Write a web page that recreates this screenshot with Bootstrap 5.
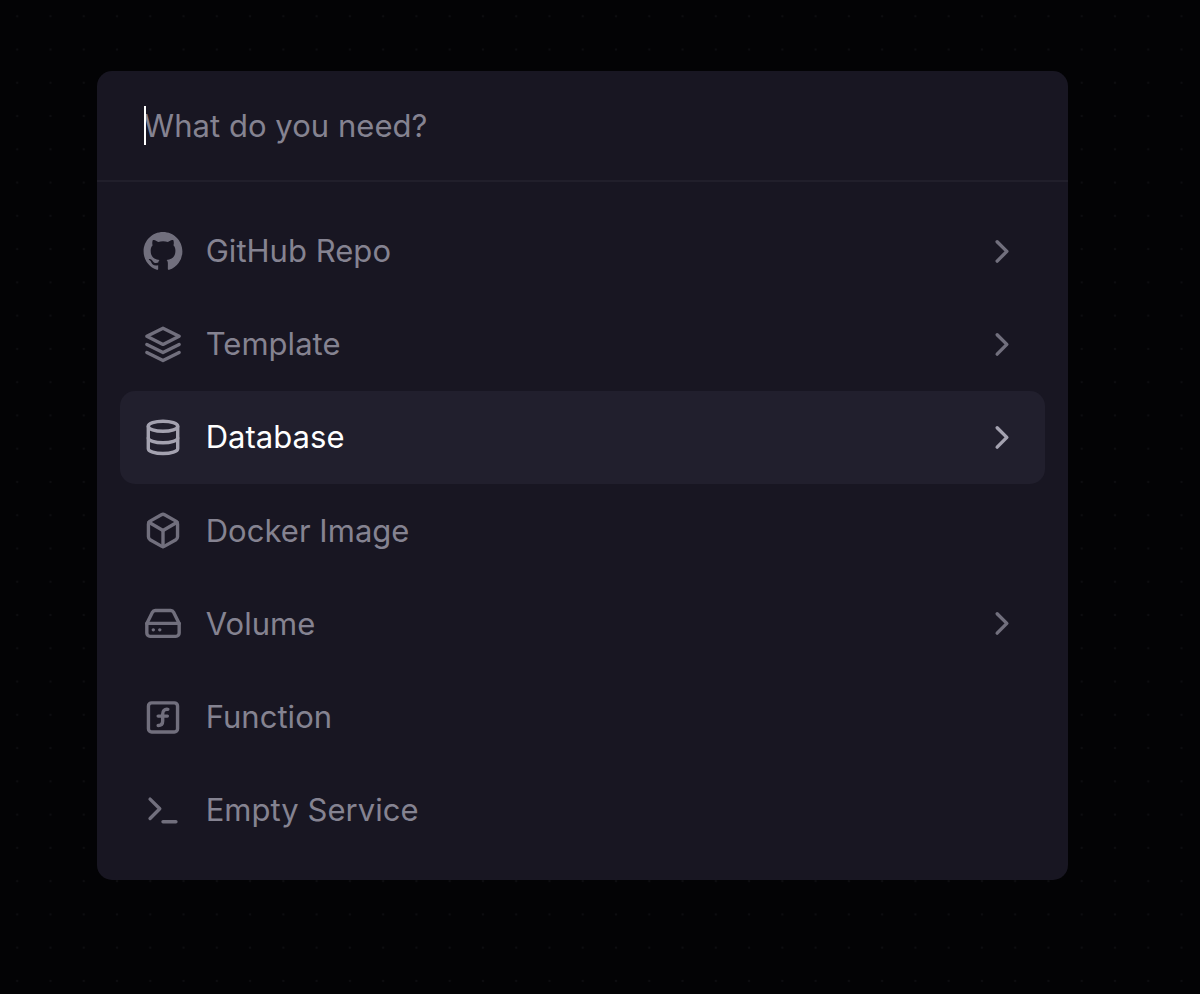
<!DOCTYPE html>
<html lang="en">
<head>
  <meta charset="UTF-8">
  <meta name="viewport" content="width=device-width, initial-scale=1.0">
  <title>New Service</title>
  <link
          rel="stylesheet"
          href="https://cdn.jsdelivr.net/npm/bootstrap@5.3.0/dist/css/bootstrap.min.css"
  />
  <style>
    body {
      font-family: Inter, sans-serif;
      font-size: 31px;
      line-height: 46px;
      background-color: #030305;
      background-image: radial-gradient(circle, #0d0d10 0, #0d0d10 0.8px, transparent 1.6px);
      background-size: 33.27px 33.27px;
      background-position: 0.6px -0.4px;
      min-height: 100vh;
      padding: 71px 132px 0 97px;
      overflow: hidden;
    }

    .palette {
      background-color: #181622;
      border-radius: 15px;
      height: 809px;
    }

    .palette-search {
      height: 111px;
      padding: 1px 46.6px 0;
      border-bottom: 2px solid #211f2b;
    }

    .palette-search input {
      color: #ffffff;
      letter-spacing: 0.04px;
    }

    .palette-search input::placeholder {
      color: #858391;
      opacity: 1;
    }

    .caret {
      left: 0;
      top: 50%;
      width: 2.5px;
      height: 39px;
      margin-top: -20px;
      background-color: #ffffff;
    }

    .palette-list {
      padding: 22.5px 23.3px;
    }

    .palette-item {
      height: 93.2px;
      padding: 0 23.3px;
      gap: 23.3px;
      border-radius: 15px;
      color: #858391;
      letter-spacing: 0.03px;
      text-decoration: none;
    }

    .palette-item svg {
      width: 38.8px;
      height: 38.8px;
      flex-shrink: 0;
      fill: none;
      stroke: #716f7d;
      stroke-width: 2.1;
      stroke-linecap: round;
      stroke-linejoin: round;
      overflow: visible;
      transform: translateX(-0.4px);
    }

    .palette-item svg.solid {
      fill: #716f7d;
      stroke: none;
    }

    .palette-item.selected {
      background-color: #211f2d;
      color: #ffffff;
    }

    .palette-item.selected svg {
      stroke: #a4a2b0;
    }
  </style>
</head>
<body>
<div class="palette d-flex flex-column overflow-hidden">
  <div class="palette-search d-flex align-items-center flex-shrink-0">
    <div class="position-relative w-100">
      <input type="text" class="d-block w-100 p-0 border-0 bg-transparent" placeholder="What do you need?">
      <span class="caret position-absolute"></span>
    </div>
  </div>
  <div class="palette-list d-flex flex-column flex-shrink-0">
    <a href="#" class="palette-item d-flex align-items-center">
      <svg class="solid" viewBox="0 0 16 16"><path d="M8 0C3.58 0 0 3.58 0 8c0 3.54 2.29 6.53 5.47 7.59.4.07.55-.17.55-.38 0-.19-.01-.82-.01-1.49-2.01.37-2.53-.49-2.69-.94-.09-.23-.48-.94-.82-1.13-.28-.15-.68-.52-.01-.53.63-.01 1.08.58 1.23.82.72 1.21 1.87.87 2.33.66.07-.52.28-.87.51-1.07-1.78-.2-3.64-.89-3.64-3.95 0-.87.31-1.59.82-2.15-.08-.2-.36-1.02.08-2.12 0 0 .67-.21 2.2.82.64-.18 1.32-.27 2-.27s1.36.09 2 .27c1.53-1.04 2.2-.82 2.2-.82.44 1.1.16 1.92.08 2.12.51.56.82 1.27.82 2.15 0 3.07-1.87 3.75-3.65 3.95.29.25.54.73.54 1.48 0 1.07-.01 1.93-.01 2.2 0 .21.15.46.55.38A8.01 8.01 0 0 0 16 8c0-4.42-3.58-8-8-8z"/></svg>
      <span class="flex-grow-1">GitHub Repo</span>
      <svg viewBox="0 0 24 24"><path d="M9 18l6-6-6-6"/></svg>
    </a>
    <a href="#" class="palette-item d-flex align-items-center">
      <svg viewBox="0 0 24 24"><path d="M12 2 2 7l10 5 10-5-10-5z"/><path d="M2 17l10 5 10-5"/><path d="M2 12l10 5 10-5"/></svg>
      <span class="flex-grow-1">Template</span>
      <svg viewBox="0 0 24 24"><path d="M9 18l6-6-6-6"/></svg>
    </a>
    <a href="#" class="palette-item selected d-flex align-items-center">
      <svg viewBox="0 0 24 24"><ellipse cx="12" cy="5.1" rx="9.1" ry="3.1"/><path d="M21.1 12.3c0 1.66-4.1 3-9.1 3s-9.1-1.34-9.1-3"/><path d="M2.9 5.1v13.9c0 1.66 4.1 3 9.1 3s9.1-1.34 9.1-3V5.1"/></svg>
      <span class="flex-grow-1">Database</span>
      <svg viewBox="0 0 24 24"><path d="M9 18l6-6-6-6"/></svg>
    </a>
    <a href="#" class="palette-item d-flex align-items-center">
      <svg viewBox="0 0 24 24"><path d="M21 16V8a2 2 0 0 0-1-1.73l-7-4a2 2 0 0 0-2 0l-7 4A2 2 0 0 0 3 8v8a2 2 0 0 0 1 1.73l7 4a2 2 0 0 0 2 0l7-4A2 2 0 0 0 21 16z"/><path d="M3.27 6.96 12 12.01l8.73-5.05"/><path d="M12 22.08V12"/></svg>
      <span class="flex-grow-1">Docker Image</span>
    </a>
    <a href="#" class="palette-item d-flex align-items-center">
      <svg viewBox="0 0 24 24"><path d="M22 12H2"/><path d="M5.45 5.11 2 12v6a2 2 0 0 0 2 2h16a2 2 0 0 0 2-2v-6l-3.45-6.89A2 2 0 0 0 16.76 4H7.24a2 2 0 0 0-1.79 1.11z"/><path d="M6 16h.01"/><path d="M10 16h.01"/></svg>
      <span class="flex-grow-1">Volume</span>
      <svg viewBox="0 0 24 24"><path d="M9 18l6-6-6-6"/></svg>
    </a>
    <a href="#" class="palette-item d-flex align-items-center">
      <svg viewBox="0 0 24 24"><rect x="3" y="3" width="18" height="18" rx="2"/><path d="M9 17c2 0 2.8-1 2.8-2.8V10c0-2 1-3.3 3.2-3"/><path d="M9 11.2h5.7"/></svg>
      <span class="flex-grow-1">Function</span>
    </a>
    <a href="#" class="palette-item d-flex align-items-center">
      <svg viewBox="0 0 24 24"><path d="M4 17l6-6-6-6"/><path d="M12 19h8"/></svg>
      <span class="flex-grow-1">Empty Service</span>
    </a>
  </div>
</div>
<script src="https://cdn.jsdelivr.net/npm/bootstrap@5.3.0/dist/js/bootstrap.bundle.min.js"></script>
</body>
</html>
